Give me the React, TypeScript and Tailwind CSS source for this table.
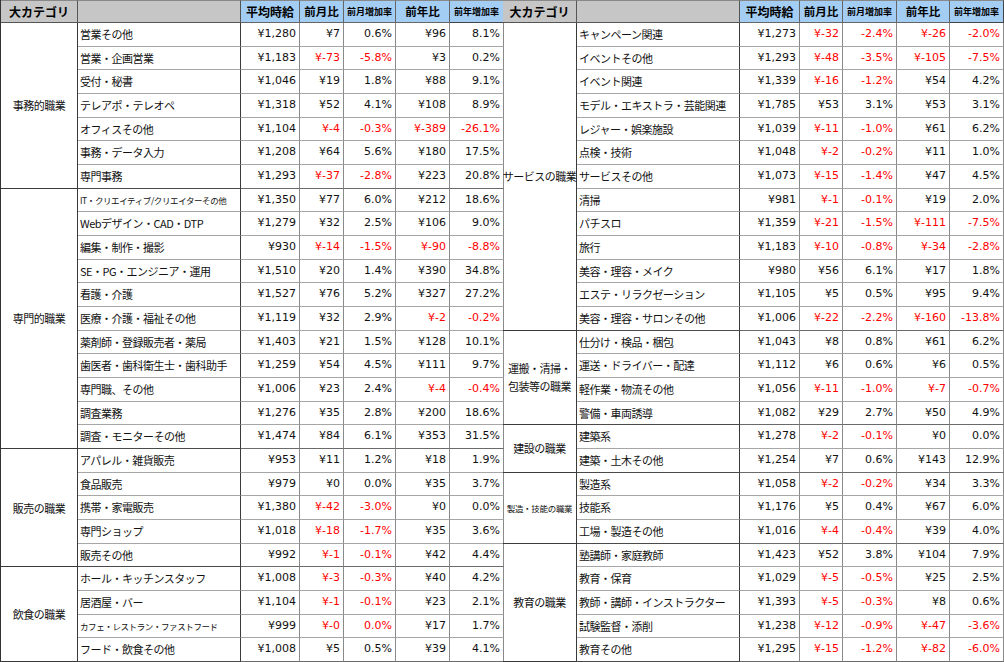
import React from "react";

type Row = [string, string, string, string, string, string, boolean?];
type Group = { cat: React.ReactNode; span: number; small?: boolean; rows: Row[] };

const left: Group[] = [
  {
    cat: "事務的職業",
    span: 7,
    rows: [
      ["営業その他", "¥1,280", "¥7", "0.6%", "¥96", "8.1%"],
      ["営業・企画営業", "¥1,183", "¥-73", "-5.8%", "¥3", "0.2%"],
      ["受付・秘書", "¥1,046", "¥19", "1.8%", "¥88", "9.1%"],
      ["テレアポ・テレオペ", "¥1,318", "¥52", "4.1%", "¥108", "8.9%"],
      ["オフィスその他", "¥1,104", "¥-4", "-0.3%", "¥-389", "-26.1%"],
      ["事務・データ入力", "¥1,208", "¥64", "5.6%", "¥180", "17.5%"],
      ["専門事務", "¥1,293", "¥-37", "-2.8%", "¥223", "20.8%"],
    ],
  },
  {
    cat: "専門的職業",
    span: 11,
    rows: [
      ["IT・クリエイティブ/クリエイターその他", "¥1,350", "¥77", "6.0%", "¥212", "18.6%", true],
      ["Webデザイン・CAD・DTP", "¥1,279", "¥32", "2.5%", "¥106", "9.0%"],
      ["編集・制作・撮影", "¥930", "¥-14", "-1.5%", "¥-90", "-8.8%"],
      ["SE・PG・エンジニア・運用", "¥1,510", "¥20", "1.4%", "¥390", "34.8%"],
      ["看護・介護", "¥1,527", "¥76", "5.2%", "¥327", "27.2%"],
      ["医療・介護・福祉その他", "¥1,119", "¥32", "2.9%", "¥-2", "-0.2%"],
      ["薬剤師・登録販売者・薬局", "¥1,403", "¥21", "1.5%", "¥128", "10.1%"],
      ["歯医者・歯科衛生士・歯科助手", "¥1,259", "¥54", "4.5%", "¥111", "9.7%"],
      ["専門職、その他", "¥1,006", "¥23", "2.4%", "¥-4", "-0.4%"],
      ["調査業務", "¥1,276", "¥35", "2.8%", "¥200", "18.6%"],
      ["調査・モニターその他", "¥1,474", "¥84", "6.1%", "¥353", "31.5%"],
    ],
  },
  {
    cat: "販売の職業",
    span: 5,
    rows: [
      ["アパレル・雑貨販売", "¥953", "¥11", "1.2%", "¥18", "1.9%"],
      ["食品販売", "¥979", "¥0", "0.0%", "¥35", "3.7%"],
      ["携帯・家電販売", "¥1,380", "¥-42", "-3.0%", "¥0", "0.0%"],
      ["専門ショップ", "¥1,018", "¥-18", "-1.7%", "¥35", "3.6%"],
      ["販売その他", "¥992", "¥-1", "-0.1%", "¥42", "4.4%"],
    ],
  },
  {
    cat: "飲食の職業",
    span: 4,
    rows: [
      ["ホール・キッチンスタッフ", "¥1,008", "¥-3", "-0.3%", "¥40", "4.2%"],
      ["居酒屋・バー", "¥1,104", "¥-1", "-0.1%", "¥23", "2.1%"],
      ["カフェ・レストラン・ファストフード", "¥999", "¥-0", "0.0%", "¥17", "1.7%", true],
      ["フード・飲食その他", "¥1,008", "¥5", "0.5%", "¥39", "4.1%"],
    ],
  },
];

const right: Group[] = [
  {
    cat: "サービスの職業",
    span: 13,
    rows: [
      ["キャンペーン関連", "¥1,273", "¥-32", "-2.4%", "¥-26", "-2.0%"],
      ["イベントその他", "¥1,293", "¥-48", "-3.5%", "¥-105", "-7.5%"],
      ["イベント関連", "¥1,339", "¥-16", "-1.2%", "¥54", "4.2%"],
      ["モデル・エキストラ・芸能関連", "¥1,785", "¥53", "3.1%", "¥53", "3.1%"],
      ["レジャー・娯楽施設", "¥1,039", "¥-11", "-1.0%", "¥61", "6.2%"],
      ["点検・技術", "¥1,048", "¥-2", "-0.2%", "¥11", "1.0%"],
      ["サービスその他", "¥1,073", "¥-15", "-1.4%", "¥47", "4.5%"],
      ["清掃", "¥981", "¥-1", "-0.1%", "¥19", "2.0%"],
      ["パチスロ", "¥1,359", "¥-21", "-1.5%", "¥-111", "-7.5%"],
      ["旅行", "¥1,183", "¥-10", "-0.8%", "¥-34", "-2.8%"],
      ["美容・理容・メイク", "¥980", "¥56", "6.1%", "¥17", "1.8%"],
      ["エステ・リラクゼーション", "¥1,105", "¥5", "0.5%", "¥95", "9.4%"],
      ["美容・理容・サロンその他", "¥1,006", "¥-22", "-2.2%", "¥-160", "-13.8%"],
    ],
  },
  {
    cat: (
      <>
        運搬・清掃・
        <br />
        包装等の職業
      </>
    ),
    span: 4,
    rows: [
      ["仕分け・検品・梱包", "¥1,043", "¥8", "0.8%", "¥61", "6.2%"],
      ["運送・ドライバー・配達", "¥1,112", "¥6", "0.6%", "¥6", "0.5%"],
      ["軽作業・物流その他", "¥1,056", "¥-11", "-1.0%", "¥-7", "-0.7%"],
      ["警備・車両誘導", "¥1,082", "¥29", "2.7%", "¥50", "4.9%"],
    ],
  },
  {
    cat: "建設の職業",
    span: 2,
    rows: [
      ["建築系", "¥1,278", "¥-2", "-0.1%", "¥0", "0.0%"],
      ["建築・土木その他", "¥1,254", "¥7", "0.6%", "¥143", "12.9%"],
    ],
  },
  {
    cat: "製造・技能の職業",
    span: 3,
    small: true,
    rows: [
      ["製造系", "¥1,058", "¥-2", "-0.2%", "¥34", "3.3%"],
      ["技能系", "¥1,176", "¥5", "0.4%", "¥67", "6.0%"],
      ["工場・製造その他", "¥1,016", "¥-4", "-0.4%", "¥39", "4.0%"],
    ],
  },
  {
    cat: "教育の職業",
    span: 5,
    rows: [
      ["塾講師・家庭教師", "¥1,423", "¥52", "3.8%", "¥104", "7.9%"],
      ["教育・保育", "¥1,029", "¥-5", "-0.5%", "¥25", "2.5%"],
      ["教師・講師・インストラクター", "¥1,393", "¥-5", "-0.3%", "¥8", "0.6%"],
      ["試験監督・添削", "¥1,238", "¥-12", "-0.9%", "¥-47", "-3.6%"],
      ["教育その他", "¥1,295", "¥-15", "-1.2%", "¥-82", "-6.0%"],
    ],
  },
];

const spanClass: Record<number, string> = {
  2: "row-span-2",
  3: "row-span-3",
  4: "row-span-4",
  5: "row-span-5",
  7: "row-span-7",
  11: "row-span-11",
  13: "row-span-13",
};

const JP = "font-['Noto_Sans_CJK_JP',sans-serif]";
const NUM = "font-['DejaVu_Sans','Noto_Sans_CJK_JP',sans-serif]";

function Num({ v, red, last }: { v: string; red?: boolean; last?: boolean }) {
  return (
    <div
      className={`flex items-center justify-end pr-[3px] border-b border-r ${
        last ? "border-b-[#6a6a6a]" : "border-b-[#a6a6a6]"
      } border-r-[#8a8a8a] text-[11px] ${NUM} ${red ? "text-[#ff0000]" : "text-[#111]"}`}
    >
      {v}
    </div>
  );
}

function Half({ groups, cols, leftEdge }: { groups: Group[]; cols: string; leftEdge?: boolean }) {
  return (
    <div
      className={`grid ${cols} grid-rows-[23px_repeat(27,minmax(0,1fr))] h-[662px] ${
        leftEdge ? "border-l border-l-[#333]" : ""
      }`}
    >
      <div
        className={`flex items-center justify-center bg-[#c6c6c6] border-b border-r border-[#555] border-t border-t-[#888] text-[12px] font-bold text-black ${JP}`}
      >
        大カテゴリ
      </div>
      <div className="bg-[#c6c6c6] border-b border-r border-[#555] border-t border-t-[#888]" />
      <div className={`flex items-center justify-center bg-[#a3cdf2] border-b border-r border-[#666] border-t border-t-[#888] text-[12px] font-bold text-black ${JP}`}>
        平均時給
      </div>
      <div className={`flex items-center justify-center bg-[#a3cdf2] border-b border-r border-[#666] border-t border-t-[#888] text-[11.5px] font-bold text-black ${JP}`}>
        前月比
      </div>
      <div className={`flex items-center justify-center bg-[#a3cdf2] border-b border-r border-[#666] border-t border-t-[#888] text-[9px] font-bold text-black ${JP}`}>
        前月増加率
      </div>
      <div className={`flex items-center justify-center bg-[#a3cdf2] border-b border-r border-[#666] border-t border-t-[#888] text-[11.5px] font-bold text-black ${JP}`}>
        前年比
      </div>
      <div className={`flex items-center justify-center bg-[#a3cdf2] border-b border-r border-[#444] border-t border-t-[#888] text-[9px] font-bold text-black ${JP}`}>
        前年増加率
      </div>
      {groups.map((g, gi) => (
        <React.Fragment key={gi}>
          <div
            className={`${spanClass[g.span]} flex items-center justify-center text-center whitespace-nowrap border-b border-r border-[#3a3a3a] text-[#111] leading-[18px] ${JP} ${
              g.small ? "text-[8.5px] tracking-[-0.3px]" : "text-[11px] tracking-[-0.5px]"
            }`}
          >
            <span>{g.cat}</span>
          </div>
          {g.rows.map((r, ri) => {
            const last = ri === g.rows.length - 1;
            const mRed = r[2].includes("-");
            const yRed = r[4].includes("-");
            return (
              <React.Fragment key={ri}>
                <div
                  className={`flex items-center pl-[2px] whitespace-nowrap overflow-hidden border-b border-r ${
                    last ? "border-b-[#4a4a4a]" : "border-b-[#a6a6a6]"
                  } border-r-[#3a3a3a] text-[#111] ${JP} ${
                    r[6] ? "text-[8.5px] tracking-[-0.4px]" : "text-[11px] tracking-[-0.5px]"
                  }`}
                >
                  {r[0]}
                </div>
                <Num v={r[1]} last={last} />
                <Num v={r[2]} red={mRed} last={last} />
                <Num v={r[3]} red={mRed} last={last} />
                <Num v={r[4]} red={yRed} last={last} />
                <Num v={r[5]} red={yRed} last={last} />
              </React.Fragment>
            );
          })}
        </React.Fragment>
      ))}
    </div>
  );
}

export default function App() {
  return (
    <div className="w-[1004px] h-[662px] overflow-hidden bg-white flex">
      <Half
        leftEdge
        groups={left}
        cols="w-[503px] grid-cols-[77px_163px_59px_44px_52px_54px_54px]"
      />
      <Half
        groups={right}
        cols="w-[501px] grid-cols-[74px_163px_60px_43px_54px_53px_54px]"
      />
    </div>
  );
}
